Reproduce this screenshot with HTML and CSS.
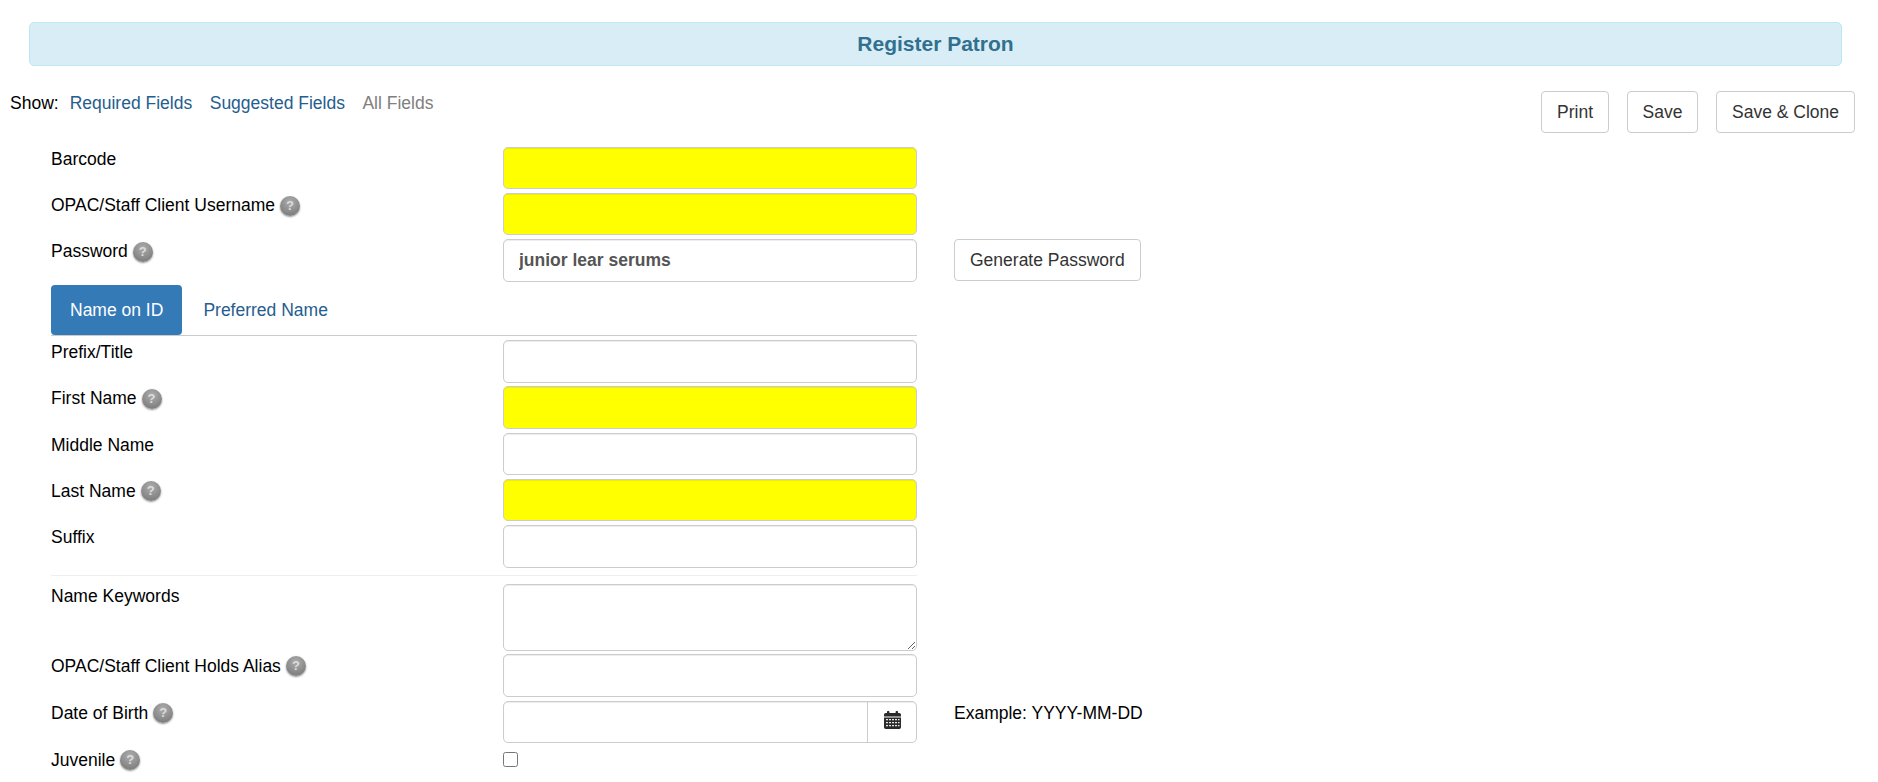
FILE: index.html
```html
<!DOCTYPE html>
<html lang="en">
<head>
<meta charset="utf-8">
<title>Register Patron</title>
<link rel="stylesheet" href="styles.css">
</head>
<body>
<h1 class="banner">Register Patron</h1>
<div class="toolbar">
  <div class="show">
    <span class="show-label">Show:</span>
    <a class="link" href="#">Required Fields</a>
    <a class="link" href="#">Suggested Fields</a>
    <a class="link muted" href="#">All Fields</a>
  </div>
  <div class="actions">
    <button class="btn" type="button">Print</button>
    <button class="btn" type="button">Save</button>
    <button class="btn" type="button">Save &amp; Clone</button>
  </div>
</div>
<form class="form">
  <div class="row"><label class="lbl">Barcode</label><input class="ctl req" type="text"></div>
  <div class="row"><label class="lbl">OPAC/Staff Client Username <span class="help">?</span></label><input class="ctl req" type="text"></div>
  <div class="row"><label class="lbl">Password <span class="help">?</span></label><input class="ctl pass" type="text" value="junior lear serums"><button class="btn side" type="button">Generate Password</button></div>
  <div class="tabs">
    <a class="tab active" href="#">Name on ID</a>
    <a class="tab" href="#">Preferred Name</a>
  </div>
  <div class="names">
    <div class="row"><label class="lbl">Prefix/Title</label><input class="ctl" type="text"></div>
    <div class="row"><label class="lbl">First Name <span class="help">?</span></label><input class="ctl req" type="text"></div>
    <div class="row"><label class="lbl">Middle Name</label><input class="ctl" type="text"></div>
    <div class="row"><label class="lbl">Last Name <span class="help">?</span></label><input class="ctl req" type="text"></div>
    <div class="row"><label class="lbl">Suffix</label><input class="ctl" type="text"></div>
  </div>
  <hr class="rule">
  <div class="row row-area"><label class="lbl">Name Keywords</label><textarea class="ctl area"></textarea></div>
  <div class="row row-wide"><label class="lbl">OPAC/Staff Client Holds Alias <span class="help">?</span></label><input class="ctl tall" type="text"></div>
  <div class="row row-wide">
    <label class="lbl">Date of Birth <span class="help">?</span></label>
    <div class="group">
      <input class="group-input" type="text">
      <span class="addon">
        <svg class="cal" viewBox="0 0 17 18" aria-hidden="true">
          <path fill="#2b2b2b" d="M0 6.500h17v9.800A1.700 1.700 0 0 1 15.300 18H1.700A1.700 1.700 0 0 1 0 16.300zM1.700 2H3V.7C3 .3 3.300 0 3.700 0h1C5 0 5.400.3 5.400.7V2h6.200V.7c0-.4.300-.7.700-.7h1c.4 0 .7.300.7.700V2h1.300C16.200 2 17 2.800 17 3.700V5.500H0V3.700C0 2.800.800 2 1.700 2z"/>
          <path fill="#e8e8e8" d="M2 8h2v1.200H2zM5 8h2v1.200H5zM8 8h2v1.200H8zM11 8h2v1.200h-2zM14 8h1.500v1.200H14zM2 11h2v1.200H2zM5 11h2v1.200H5zM8 11h2v1.200H8zM11 11h2v1.200h-2zM14 11h1.500v1.200H14zM2 14h2v1.200H2zM5 14h2v1.200H5zM8 14h2v1.200H8zM11 14h2v1.200h-2zM14 14h1.500v1.200H14z"/>
        </svg>
      </span>
    </div>
    <span class="hint">Example: YYYY-MM-DD</span>
  </div>
  <div class="row"><label class="lbl">Juvenile <span class="help">?</span></label><input class="check" type="checkbox"></div>
</form>
</body>
</html>
```
FILE: styles.css
```css
* { box-sizing: border-box; }
html, body { margin: 0; padding: 0; }
body {
  background: #fff;
  color: #000;
  font-family: "Liberation Sans", Arial, sans-serif;
  font-size: 17.5px;
  line-height: 25px;
  overflow: hidden;
  height: 782px;
}
.banner {
  margin: 22px 36px 0 29px;
  height: 44px;
  background: #d9edf7;
  border: 1px solid #bce8f1;
  border-radius: 5px;
  color: #31708f;
  font-size: 21px;
  font-weight: 700;
  line-height: 42px;
  text-align: center;
}
.toolbar {
  display: flex;
  justify-content: space-between;
  align-items: flex-start;
  padding: 25px 23px 0 10px;
}
.show { display: flex; }
.show-label { margin-right: 11px; }
.link { color: #255d8e; text-decoration: none; margin-right: 17.5px; }
.link.muted { color: #808080; }
.actions { display: flex; gap: 17.5px; }
.btn {
  height: 42px;
  padding: 0 15px;
  background: #fff;
  border: 1px solid #ccc;
  border-radius: 4px;
  color: #333;
  font: inherit;
  white-space: nowrap;
}
.form { padding: 14px 0 0 51px; }
.row {
  display: flex;
  align-items: flex-start;
  height: 46px;
}
.lbl {
  flex: 0 0 452px;
  display: flex;
  align-items: center;
  gap: 5px;
  height: 25px;
}
.ctl {
  flex: 0 0 414px;
  width: 414px;
  height: 42px;
  padding: 6px 15px;
  background: #fff;
  border: 1px solid #ccc;
  border-radius: 5px;
  box-shadow: inset 0 1px 1px rgba(0,0,0,.075);
  color: #555;
  font: inherit;
  outline: none;
}
.ctl.req { background: #ff0; }
.ctl.pass { font-weight: 700; height: 43px; }
.ctl.tall { height: 43px; }
.side { margin-left: 37px; }
.help {
  flex: none;
  width: 20px;
  height: 20px;
  border-radius: 50%;
  background: radial-gradient(circle at 50% 30%, #adadad, #808080 75%);
  box-shadow: 0 1px 2px rgba(0,0,0,.45);
  color: #dcdcdc;
  font-size: 13px;
  font-weight: 700;
  line-height: 20px;
  text-align: center;
}
.tabs {
  display: flex;
  width: 866px;
  height: 51px;
  margin-bottom: 4px;
  border-bottom: 1px solid #ccc;
}
.tab {
  height: 50px;
  padding: 0 19px;
  border-radius: 4px;
  color: #255d8e;
  line-height: 50px;
  text-decoration: none;
}
.tab.active { background: #337ab7; color: #fff; margin-right: 2px; }
.names .row { height: 46.3px; }
.names .ctl { height: 42.55px; }
.rule {
  width: 866px;
  height: 1px;
  margin: 3.5px 0 8px;
  border: 0;
  background: #eee;
}
.row.row-area { height: 70px; }
.row.row-wide { height: 47px; }
.ctl.area { height: 67px; resize: vertical; display: block; }
.group {
  flex: 0 0 414px;
  display: flex;
  height: 42px;
  border: 1px solid #ccc;
  border-radius: 5px;
  overflow: hidden;
  box-shadow: inset 0 1px 1px rgba(0,0,0,.075);
}
.group-input {
  flex: 1;
  min-width: 0;
  border: 0;
  background: transparent;
  font: inherit;
  outline: none;
}
.addon {
  flex: 0 0 49px;
  display: flex;
  align-items: center;
  justify-content: center;
  border-left: 1px solid #ccc;
}
.cal { width: 17px; height: 18px; margin-bottom: 3px; }
.hint { margin-left: 37px; }
.check { width: 15px; height: 15px; margin: 4px 0 0; }
```
